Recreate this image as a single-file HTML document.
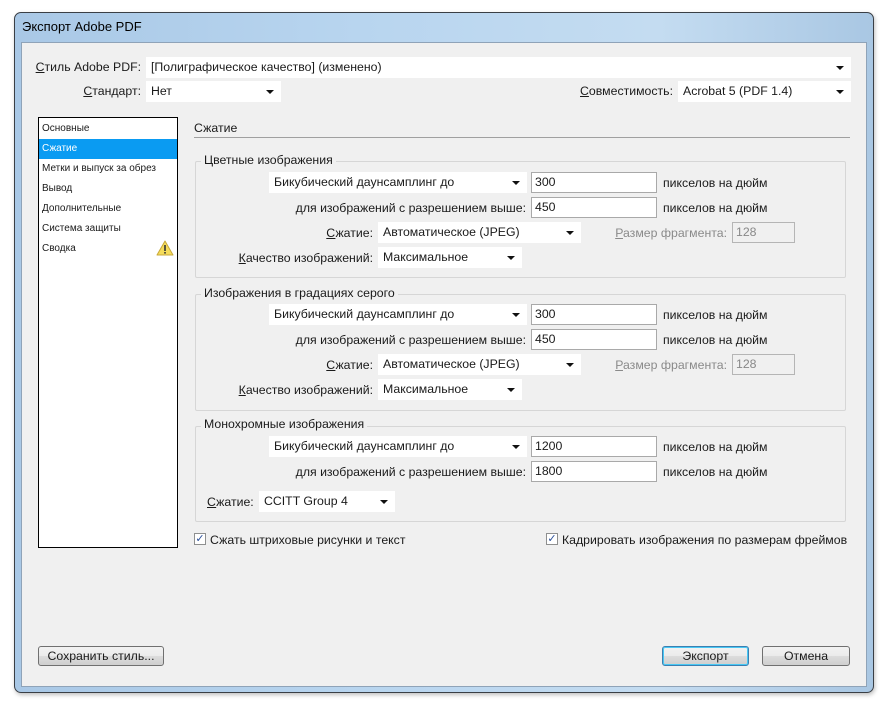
<!DOCTYPE html>
<html><head><meta charset="utf-8"><style>
*{box-sizing:border-box;margin:0;padding:0}
body{width:888px;height:708px;background:#fff;position:relative;overflow:hidden;font-family:"Liberation Sans","DejaVu Sans",sans-serif;font-size:12.3px;color:#1a1a1a}
.a{position:absolute;white-space:nowrap}
#win{left:14px;top:12px;width:860px;height:681px;border:1px solid #3a3f45;border-radius:7px;background:linear-gradient(90deg,#a9c8e6 0%,#b8d5ef 40%,#c4dcf1 75%,#a9c7e3 100%);box-shadow:1px 2px 4px rgba(0,0,0,.25)}
#title{left:22px;top:19px;font-size:13px;color:#000}
#cnt{left:21px;top:42px;width:846px;height:645px;background:#f0f0f0;border:1px solid #8fa3b8}
.r{text-align:right}
.dd{position:absolute;background:#fff;height:21px;line-height:21px;padding-left:5px}
.dd:after{content:"";position:absolute;right:7px;top:9px;border-left:4px solid transparent;border-right:4px solid transparent;border-top:4px solid #111}
.in{position:absolute;background:#fff;border:1px solid #a9a9a9;height:21px;line-height:19px;padding-left:3px}
.dis{background:#f0f0f0;color:#888;border-color:#b5b5b5}
.grp{position:absolute;border:1px solid #d6d6d6;border-radius:2px}
.gl{background:#f0f0f0;padding:0 3px}
#list{left:38px;top:117px;width:140px;height:431px;border:1px solid #000;background:#fff}
.li{position:absolute;left:2px;width:136px;height:20px;line-height:20px;font-size:10px;padding-left:1px}
.btn{position:absolute;height:20px;border:1px solid #707070;border-radius:3px;background:linear-gradient(#f2f2f2,#ebebeb 50%,#dcdcdc 51%,#cfcfcf);text-align:center;line-height:18px}
.cb{position:absolute;width:12px;height:12px;border:1px solid #8e8f8f;background:#fff;font-size:11px;line-height:10px;text-align:center;color:#2a4f9a;font-weight:bold}
.g{color:#8a8a8a}
u{text-decoration:underline}
</style></head><body>
<div id="win" class="a"></div>
<div id="title" class="a">Экспорт Adobe PDF</div>
<div id="cnt" class="a"></div>

<div class="a r" style="left:30px;top:60px;width:111px"><u>С</u>тиль Adobe PDF:</div>
<div class="dd" style="left:146px;top:57px;width:705px">[Полиграфическое качество] (изменено)</div>
<div class="a r" style="left:30px;top:84px;width:111px"><u>С</u>тандарт:</div>
<div class="dd" style="left:146px;top:81px;width:135px">Нет</div>
<div class="a r" style="left:520px;top:84px;width:153px"><u>С</u>овместимость:</div>
<div class="dd" style="left:678px;top:81px;width:173px">Acrobat 5 (PDF 1.4)</div>

<div id="list" class="a">
<div class="li" style="top:1px">Основные</div>
<div class="li" style="top:21px;background:#0a9bf2;color:#fff;left:0;width:138px;padding-left:3px">Сжатие</div>
<div class="li" style="top:41px">Метки и выпуск за обрез</div>
<div class="li" style="top:61px">Вывод</div>
<div class="li" style="top:81px">Дополнительные</div>
<div class="li" style="top:101px">Система защиты</div>
<div class="li" style="top:121px">Сводка</div>
<svg class="a" style="left:117px;top:122px" width="18" height="16" viewBox="0 0 18 16"><path d="M9 1 L17 15 L1 15 Z" fill="#f5dc5a" stroke="#c9a93a" stroke-width="1" stroke-linejoin="round"/><rect x="8.2" y="5" width="1.6" height="6" fill="#333"/><rect x="8.2" y="12" width="1.6" height="1.6" fill="#333"/></svg>
</div>

<div class="a" style="left:194px;top:121px">Сжатие</div>
<div class="a" style="left:194px;top:137px;width:656px;height:1px;background:#a0a0a0"></div>

<!-- group 1 -->
<div class="grp" style="left:195px;top:161px;width:651px;height:117px"></div>
<div class="a gl" style="left:201px;top:153px">Цветные изображения</div>
<div class="dd" style="left:269px;top:172px;width:258px">Бикубический даунсамплинг до</div>
<div class="in" style="left:531px;top:172px;width:126px">300</div>
<div class="a" style="left:663px;top:176px">пикселов на дюйм</div>
<div class="a r" style="left:250px;top:201px;width:276px"><u>д</u>ля изображений с разрешением выше:</div>
<div class="in" style="left:531px;top:197px;width:126px">450</div>
<div class="a" style="left:663px;top:201px">пикселов на дюйм</div>
<div class="a r" style="left:250px;top:226px;width:123px"><u>С</u>жатие:</div>
<div class="dd" style="left:378px;top:222px;width:203px">Автоматическое (JPEG)</div>
<div class="a r g" style="left:580px;top:226px;width:147px"><u>Р</u>азмер фрагмента:</div>
<div class="in dis" style="left:732px;top:222px;width:63px">128</div>
<div class="a r" style="left:200px;top:251px;width:173px"><u>К</u>ачество изображений:</div>
<div class="dd" style="left:378px;top:247px;width:144px">Максимальное</div>

<!-- group 2 -->
<div class="grp" style="left:195px;top:294px;width:651px;height:117px"></div>
<div class="a gl" style="left:201px;top:286px">Изображения в градациях серого</div>
<div class="dd" style="left:269px;top:304px;width:258px">Бикубический даунсамплинг до</div>
<div class="in" style="left:531px;top:304px;width:126px">300</div>
<div class="a" style="left:663px;top:308px">пикселов на дюйм</div>
<div class="a r" style="left:250px;top:333px;width:276px"><u>д</u>ля изображений с разрешением выше:</div>
<div class="in" style="left:531px;top:329px;width:126px">450</div>
<div class="a" style="left:663px;top:333px">пикселов на дюйм</div>
<div class="a r" style="left:250px;top:358px;width:123px"><u>С</u>жатие:</div>
<div class="dd" style="left:378px;top:354px;width:203px">Автоматическое (JPEG)</div>
<div class="a r g" style="left:580px;top:358px;width:147px"><u>Р</u>азмер фрагмента:</div>
<div class="in dis" style="left:732px;top:354px;width:63px">128</div>
<div class="a r" style="left:200px;top:383px;width:173px"><u>К</u>ачество изображений:</div>
<div class="dd" style="left:378px;top:379px;width:144px">Максимальное</div>

<!-- group 3 -->
<div class="grp" style="left:195px;top:426px;width:651px;height:96px"></div>
<div class="a gl" style="left:201px;top:417px">Монохромные изображения</div>
<div class="dd" style="left:269px;top:436px;width:258px">Бикубический даунсамплинг до</div>
<div class="in" style="left:531px;top:436px;width:126px">1200</div>
<div class="a" style="left:663px;top:440px">пикселов на дюйм</div>
<div class="a r" style="left:250px;top:465px;width:276px"><u>д</u>ля изображений с разрешением выше:</div>
<div class="in" style="left:531px;top:461px;width:126px">1800</div>
<div class="a" style="left:663px;top:465px">пикселов на дюйм</div>
<div class="a" style="left:207px;top:495px"><u>С</u>жатие:</div>
<div class="dd" style="left:259px;top:491px;width:136px">CCITT Group 4</div>

<div class="cb" style="left:194px;top:533px">✓</div>
<div class="a" style="left:210px;top:533px">Сжать штриховые рисунки и текст</div>
<div class="cb" style="left:546px;top:533px">✓</div>
<div class="a" style="left:562px;top:533px">Кадрировать изображения по размерам фреймов</div>

<div class="btn" style="left:38px;top:646px;width:126px">Сохранить стиль...</div>
<div class="btn" style="left:662px;top:646px;width:87px;border-color:#3c7fb1;box-shadow:inset 0 0 0 1px #48c8f4">Экспорт</div>
<div class="btn" style="left:762px;top:646px;width:88px">Отмена</div>
</body></html>
